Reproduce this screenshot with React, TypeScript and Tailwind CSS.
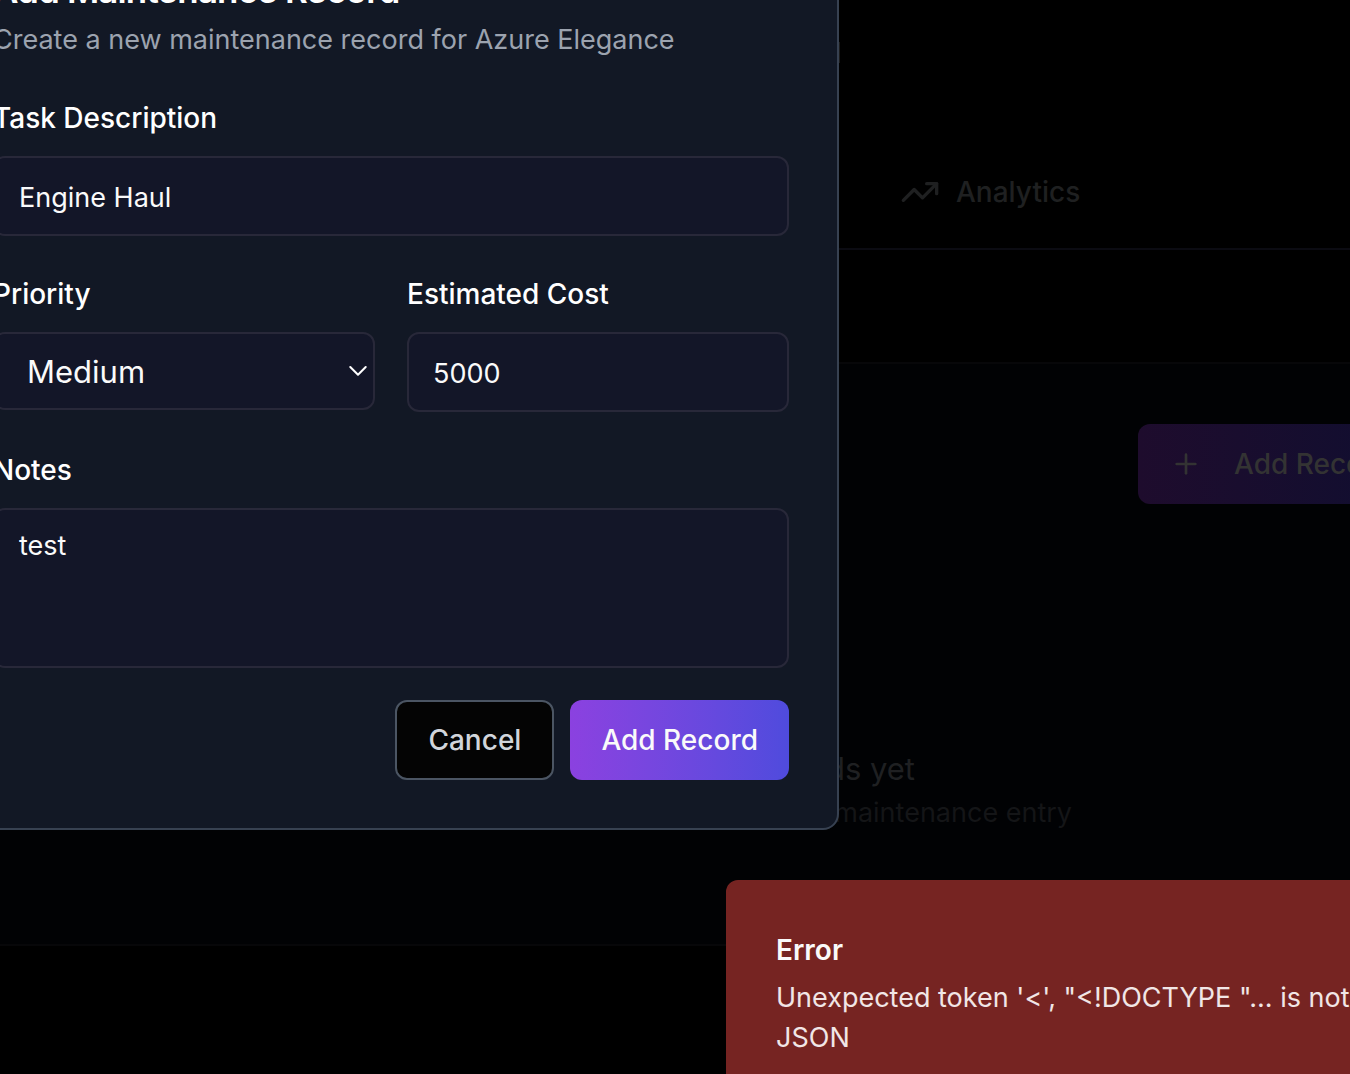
import React from 'react';
import { Plus, TrendingUp } from 'lucide-react';

const field =
  'block w-full rounded-xl border-2 border-[#282839] bg-[#131628] px-6 text-[27px] text-[#fafafa] outline-none';
const label = 'block text-[28px] leading-7 font-medium text-white';

function MaintenancePage() {
  return (
    <main className="flex min-h-screen flex-col">
      <header className="h-[136px] shrink-0 pt-[42px]">
        <div className="h-[21px] w-[840px] border-r border-[#1c1c1c]" />
      </header>
      <nav className="flex h-[114px] items-start border-b-2 border-[#0b0b12] pt-9 pl-[900px]">
        <button type="button" className="flex items-center gap-4 text-[28px] leading-10 font-medium text-[#1f2021]">
          <TrendingUp size={40} />
          Analytics
        </button>
      </nav>
      <section className="mt-28 flex h-[584px] flex-col border-y-2 border-[#070709] bg-[#010204]">
        <div className="flex pt-[60px] pl-[1138px]">
          <button
            type="button"
            className="flex h-20 shrink-0 items-center gap-8 rounded-xl bg-linear-to-r from-[#1e0c2d] to-[#0f0e30] px-8 text-[28px] font-medium whitespace-nowrap text-[#333333]"
          >
            <Plus size={32} />
            Add Record
          </button>
        </div>
        <div className="mt-[241px] pl-[436px]">
          <p className="w-[479px] text-right text-[31px] leading-12 whitespace-nowrap text-[#1f2022]">
            No maintenance records yet
          </p>
          <p className="w-[636px] text-right text-[27px] leading-10 whitespace-nowrap text-[#141517]">
            Create your first maintenance entry
          </p>
        </div>
      </section>
    </main>
  );
}

function RecordDialog() {
  return (
    <div
      role="dialog"
      aria-labelledby="dialog-title"
      className="absolute -top-[78px] -left-[57px] w-[896px] rounded-2xl border-2 border-[#374151] bg-[#121825] p-12"
    >
      <h2 id="dialog-title" className="text-[35px] leading-9 font-semibold tracking-tight text-white">
        Add Maintenance Record
      </h2>
      <p className="mt-3 text-[27px] leading-10 text-[#9ca3af]">
        Create a new maintenance record for Azure Elegance
      </p>
      <form className="mt-11" onSubmit={(e) => e.preventDefault()}>
        <div className="grid gap-11">
          <div className="grid gap-6">
            <label htmlFor="task" className={label}>Task Description</label>
            <input id="task" defaultValue="Engine Haul" className={`${field} h-20 pt-0.5`} />
          </div>
          <div className="grid grid-cols-2 items-start gap-8">
            <div className="grid gap-6">
              <label htmlFor="priority" className={label}>Priority</label>
              <div className="relative">
                <select
                  id="priority"
                  defaultValue="Medium"
                  className="block h-[78px] w-full appearance-none rounded-xl border-2 border-[#282839] bg-[#131628] px-8 pt-0.5 text-[31px] text-[#fafafa] outline-none"
                >
                  <option>Low</option>
                  <option>Medium</option>
                  <option>High</option>
                </select>
                <svg
                  viewBox="0 0 18 12"
                  className="pointer-events-none absolute top-[33px] right-2 h-3 w-[18px] fill-none stroke-white stroke-2"
                  strokeLinecap="round"
                  strokeLinejoin="round"
                >
                  <path d="M1.3 2 9 9.7 16.7 2" />
                </svg>
              </div>
            </div>
            <div className="grid gap-6">
              <label htmlFor="cost" className={label}>Estimated Cost</label>
              <input id="cost" inputMode="numeric" defaultValue="5000" className={`${field} h-20 pt-0.5`} />
            </div>
          </div>
          <div className="grid gap-6">
            <label htmlFor="notes" className={label}>Notes</label>
            <textarea id="notes" defaultValue="test" className={`${field} h-40 resize-none py-4 leading-10`} />
          </div>
        </div>
        <div className="mt-8 flex justify-end gap-4">
          <button
            type="button"
            className="h-20 rounded-xl border-2 border-[#4b5563] bg-[#040404] px-[31px] text-[28px] font-medium text-[#d1d5db]"
          >
            Cancel
          </button>
          <button
            type="submit"
            className="h-20 rounded-xl bg-linear-to-r from-[#8b41e0] to-[#4f4bdd] px-[31px] text-[28px] font-medium text-[#fafafa]"
          >
            Add Record
          </button>
        </div>
      </form>
    </div>
  );
}

function ErrorToast() {
  return (
    <div
      role="alert"
      className="absolute top-[880px] left-[726px] w-[776px] rounded-xl border-2 border-[#762422] bg-[#762422] p-12 leading-10 text-[#fafafa]"
    >
      <p className="text-[28px] leading-10 font-semibold">Error</p>
      <p className="mt-2 text-[27px] leading-10 text-[#f1e6e6]">
        Unexpected token '&lt;', "&lt;!DOCTYPE "... is not valid JSON
      </p>
    </div>
  );
}

export default function App() {
  return (
    <div className="relative min-h-screen overflow-hidden bg-black font-['Inter',sans-serif]">
      <MaintenancePage />
      <RecordDialog />
      <ErrorToast />
    </div>
  );
}
